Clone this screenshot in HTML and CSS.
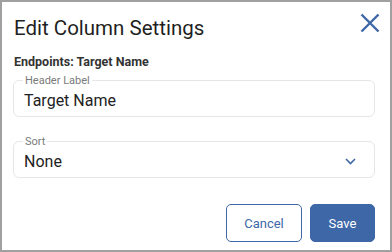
FILE: index.html
```html
<!DOCTYPE html>
<html>
<head>
<meta charset="utf-8">
<link rel="stylesheet" href="styles.css">
</head>
<body>
<div class="dialog">
  <div class="header">
    <h1 class="title">Edit Column Settings</h1>
    <button class="close" aria-label="Close">
      <svg width="20" height="20" viewBox="0 0 20 20"><path d="M1.5 1.5 L18.5 18.5 M18.5 1.5 L1.5 18.5" stroke="#3d67a7" stroke-width="2.4" fill="none"/></svg>
    </button>
  </div>
  <div class="subtitle">Endpoints: Target Name</div>
  <fieldset class="field">
    <legend class="label">Header Label</legend>
    <div class="value">Target Name</div>
  </fieldset>
  <fieldset class="field">
    <legend class="label">Sort</legend>
    <div class="value select">
      <span>None</span>
      <svg width="11" height="7" viewBox="0 0 11 7"><path d="M1 1 L5.5 5.5 L10 1" stroke="#3d67a7" stroke-width="1.6" fill="none"/></svg>
    </div>
  </fieldset>
  <div class="actions">
    <button class="btn btn-outline">Cancel</button>
    <button class="btn btn-primary">Save</button>
  </div>
</div>
</body>
</html>
```
FILE: styles.css
```css
html, body { margin: 0; padding: 0; }
body { font-family: Roboto, "Liberation Sans", sans-serif; color: #212121; }
.dialog {
  box-sizing: border-box;
  width: 392px;
  height: 252px;
  border: 2px solid #a0a0a0;
  background: #fff;
  padding: 0 15px 0 11px;
  display: flex;
  flex-direction: column;
}
.header { display: flex; justify-content: space-between; align-items: flex-start; }
.title { margin: 14px 0 0 1px; font-size: 20.5px; font-weight: 400; line-height: 24px; color: #1f1f1f; }
.close { margin: 11px -5px 0 0; border: 0; background: none; padding: 0; width: 20px; height: 20px; }
.subtitle { margin: 14px 0 0 1px; font-size: 12.5px; font-weight: 700; line-height: 16px; color: #333; }
.field {
  margin: 4px 0 0 0;
  border: 1px solid #e6e6e6;
  border-radius: 6px;
  padding: 0 10px 6px 10px;
  min-width: 0;
}
.field + .field { margin-top: 18px; }
.label { font-size: 11px; color: #7a7a7a; padding: 0 2px; line-height: 13px; margin-left: -1px; }
.value { font-size: 16px; line-height: 19px; color: #222; margin-top: 4px; }
.select { display: flex; justify-content: space-between; align-items: center; padding-right: 8px; }
.actions { display: flex; justify-content: flex-end; gap: 8px; margin-top: auto; margin-bottom: 8px; }
.btn {
  font-family: Roboto, "Liberation Sans", sans-serif;
  font-size: 13px;
  height: 38px;
  border-radius: 5px;
  cursor: pointer;
}
.btn-outline { width: 76px; background: #fff; border: 1px solid #3d67a7; color: #3d67a7; }
.btn-primary { width: 65px; background: #3d67a7; border: 1px solid #3d67a7; color: #fff; }
```
